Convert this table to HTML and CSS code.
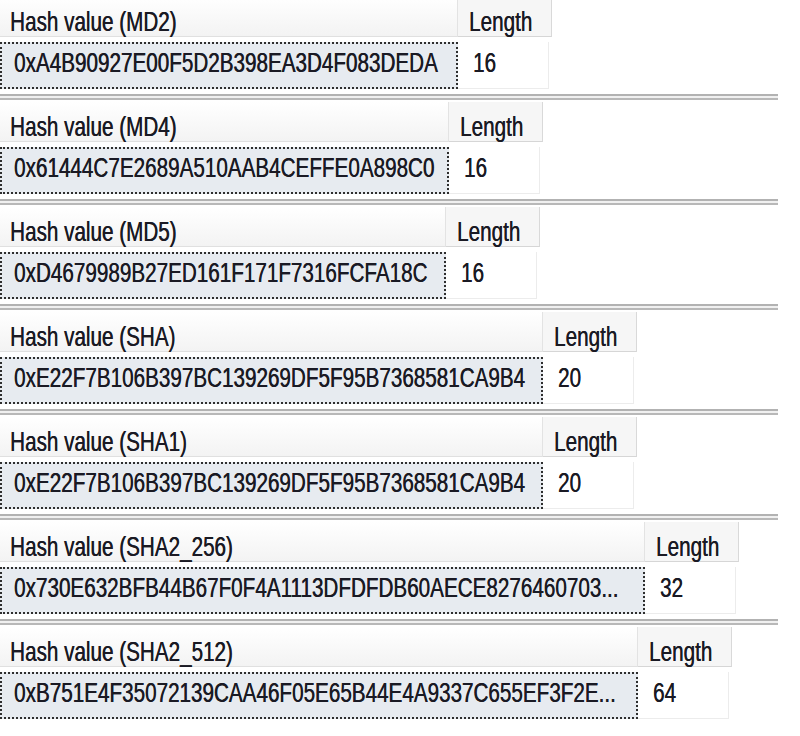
FILE: index.html
```html
<!DOCTYPE html>
<html>
<head>
<meta charset="utf-8">
<link rel="stylesheet" href="styles.css">
</head>
<body>
<div class="results">
  <section class="grid g-md2">
    <div class="row head"><div class="cell c-hash"><span class="t">Hash value (MD2)</span></div><div class="cell c-len"><span class="t">Length</span></div></div>
    <div class="row data"><div class="cell c-hash sel"><span class="t">0xA4B90927E00F5D2B398EA3D4F083DEDA</span></div><div class="cell c-len"><span class="t">16</span></div></div>
    <div class="split"></div>
  </section>
  <section class="grid g-md4">
    <div class="row head"><div class="cell c-hash"><span class="t">Hash value (MD4)</span></div><div class="cell c-len"><span class="t">Length</span></div></div>
    <div class="row data"><div class="cell c-hash sel"><span class="t">0x61444C7E2689A510AAB4CEFFE0A898C0</span></div><div class="cell c-len"><span class="t">16</span></div></div>
    <div class="split"></div>
  </section>
  <section class="grid g-md5">
    <div class="row head"><div class="cell c-hash"><span class="t">Hash value (MD5)</span></div><div class="cell c-len"><span class="t">Length</span></div></div>
    <div class="row data"><div class="cell c-hash sel"><span class="t">0xD4679989B27ED161F171F7316FCFA18C</span></div><div class="cell c-len"><span class="t">16</span></div></div>
    <div class="split"></div>
  </section>
  <section class="grid g-sha">
    <div class="row head"><div class="cell c-hash"><span class="t">Hash value (SHA)</span></div><div class="cell c-len"><span class="t">Length</span></div></div>
    <div class="row data"><div class="cell c-hash sel"><span class="t">0xE22F7B106B397BC139269DF5F95B7368581CA9B4</span></div><div class="cell c-len"><span class="t">20</span></div></div>
    <div class="split"></div>
  </section>
  <section class="grid g-sha1">
    <div class="row head"><div class="cell c-hash"><span class="t">Hash value (SHA1)</span></div><div class="cell c-len"><span class="t">Length</span></div></div>
    <div class="row data"><div class="cell c-hash sel"><span class="t">0xE22F7B106B397BC139269DF5F95B7368581CA9B4</span></div><div class="cell c-len"><span class="t">20</span></div></div>
    <div class="split"></div>
  </section>
  <section class="grid g-sha256">
    <div class="row head"><div class="cell c-hash"><span class="t">Hash value (SHA2_256)</span></div><div class="cell c-len"><span class="t">Length</span></div></div>
    <div class="row data"><div class="cell c-hash sel"><span class="t">0x730E632BFB44B67F0F4A1113DFDFDB60AECE8276460703...</span></div><div class="cell c-len"><span class="t">32</span></div></div>
    <div class="split"></div>
  </section>
  <section class="grid g-sha512">
    <div class="row head"><div class="cell c-hash"><span class="t">Hash value (SHA2_512)</span></div><div class="cell c-len"><span class="t">Length</span></div></div>
    <div class="row data"><div class="cell c-hash sel"><span class="t">0xB751E4F35072139CAA46F05E65B44E4A9337C655EF3F2E...</span></div><div class="cell c-len"><span class="t">64</span></div></div>
  </section>
</div>
</body>
</html>
```
FILE: styles.css
```css
html, body {
  margin: 0;
  padding: 0;
  background: #ffffff;
}

body {
  font-family: "Liberation Sans", Arial, sans-serif;
  font-size: 27px;
  color: #1a1a24;
  overflow: hidden;
}

.results {
  margin-top: -3px;
}

.grid {
  --hw: 458px;
}
.g-md4 { --hw: 449px; }
.g-md5 { --hw: 446px; }
.g-sha, .g-sha1 { --hw: 543px; }
.g-sha256 { --hw: 645px; }
.g-sha512 { --hw: 638px; }

.row {
  display: flex;
}

.cell {
  box-sizing: border-box;
  white-space: nowrap;
  overflow: visible;
  line-height: 27px;
}

.t {
  display: inline-block;
  transform: scale(0.765, 1.04);
  transform-origin: 0 50%;
  white-space: nowrap;
  text-shadow: 0.45px 0 0 currentColor;
}

.c-hash {
  width: var(--hw);
}

/* header row */
.head {
  height: 40px;
}
.head .cell {
  padding-top: 12px;
  padding-left: 10px;
}
.head .c-hash {
  background: linear-gradient(#ffffff, #f3f3f3);
  border-right: 1px solid #e3e3e3;
  border-bottom: 1px solid #e0e0e0;
}
.head .c-len {
  width: 94px;
  padding-left: 11px;
  background: #f6f6f6;
  border-right: 1px solid #d9d9d9;
  border-bottom: 1px solid #d6d6d6;
}

/* data row */
.data {
  margin-top: 5px;
  height: 47px;
}
.data .cell {
  padding-top: 6px;
  padding-left: 12px;
}
.sel {
  background: #e7ebf0;
  border: 2px dotted #2e2e2e;
}
.data .c-len {
  width: 91px;
  padding-top: 8px;
  padding-left: 15px;
  border-right: 1px solid #ececec;
  border-bottom: 1px solid #ececec;
}

/* splitter between result grids */
.split {
  width: 778px;
  height: 6px;
  margin-top: 5px;
  margin-bottom: 2px;
  border-top: 2px solid #b2b2b2;
  border-bottom: 2px solid #b8b8b8;
  background: #f0f0f0;
  box-sizing: border-box;
}
```
